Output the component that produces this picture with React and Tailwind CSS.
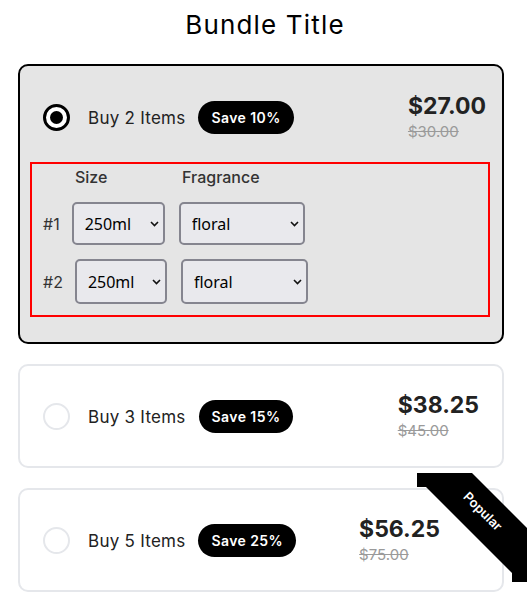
import React from "react";

const bundles = [
  { key: 2, label: "Buy 2 Items", save: "Save 10%", price: "$27.00", was: "$30.00" },
  { key: 3, label: "Buy 3 Items", save: "Save 15%", price: "$38.25", was: "$45.00" },
  { key: 5, label: "Buy 5 Items", save: "Save 25%", price: "$56.25", was: "$75.00" },
];

function Radio({ checked }) {
  if (checked) {
    return (
      <span className="flex h-[27px] w-[27px] shrink-0 items-center justify-center rounded-full border-[3px] border-black bg-white">
        <span className="h-[13px] w-[13px] rounded-full bg-black" />
      </span>
    );
  }
  return <span className="h-[27px] w-[27px] shrink-0 rounded-full border-2 border-[#e5e7eb] bg-white" />;
}

function Chevron() {
  return (
    <svg className="pointer-events-none absolute right-[6px] top-1/2 -mt-[3px]" width="9" height="6" viewBox="0 0 9 6">
      <path d="M1 1l3.5 3.5L8 1" fill="none" stroke="#111" strokeWidth="1.6" />
    </svg>
  );
}

function Picker({ value, options, width, height }) {
  return (
    <div className={`relative ${width}`}>
      <select
        defaultValue={value}
        className={`${height} w-full appearance-none rounded-[5px] border-2 border-[#85858f] bg-[#e9e9ed] pl-[11px] text-[16px] text-black outline-none`}
        style={{ fontFamily: '"Noto Sans", sans-serif' }}
      >
        {options.map((o) => (
          <option key={o}>{o}</option>
        ))}
      </select>
      <Chevron />
    </div>
  );
}

function Header({ bundle, checked }) {
  return (
    <div className="flex items-center">
      <Radio checked={checked} />
      <span className="ml-[18px] pt-[4px] text-[17px] tracking-[0.015em] text-[#222]">{bundle.label}</span>
      <span className="ml-[13px] flex h-[33px] items-center rounded-full bg-black px-[13px] text-[14px] font-semibold tracking-[0.03em] text-white">
        {bundle.save}
      </span>
    </div>
  );
}

function Price({ bundle }) {
  return (
    <div className="flex flex-col">
      <span className="text-[23px] font-bold leading-[30px] text-[#222]">{bundle.price}</span>
      <span className="text-[15px] leading-[22px] text-[#9a9a9a] line-through">{bundle.was}</span>
    </div>
  );
}

export default function App() {
  const [first, second, third] = bundles;

  return (
    <div className="w-[530px] bg-white pb-[17px]" style={{ fontFamily: 'Inter, "Liberation Sans", sans-serif' }}>
      <h1 className="pt-[9px] text-center text-[26px] font-normal leading-8 tracking-[0.045em] text-black">Bundle Title</h1>

      <div className="ml-[18px] mt-[23px] flex w-[486px] flex-col gap-[20px]">
        <div className="rounded-[10px] border-2 border-black bg-[#e5e5e5] pb-[25px] pt-[15px]">
          <div className="flex h-[72px] items-center justify-between pl-[23px] pr-[16px]">
            <Header bundle={first} checked />
            <Price bundle={first} />
          </div>

          <div className="ml-[10px] mt-[9px] w-[460px] border-2 border-[#ff0000] px-[11px] pb-[11px] pt-[1px] text-[#333]">
            <div className="flex h-[24px] items-center pl-[32px] text-[16px] font-medium">
              <span className="w-[107px]">Size</span>
              <span>Fragrance</span>
            </div>
            <div className="mt-[13px] flex items-center">
              <span className="text-[16px]">#1</span>
              <div className="ml-[12px]">
                <Picker value="250ml" options={["250ml", "500ml"]} width="w-[93px]" height="h-[43px]" />
              </div>
              <div className="ml-[14px]">
                <Picker value="floral" options={["floral", "citrus", "woody"]} width="w-[126px]" height="h-[43px]" />
              </div>
            </div>
            <div className="mt-[14px] flex items-center">
              <span className="text-[16px]">#2</span>
              <div className="ml-[12px]">
                <Picker value="250ml" options={["250ml", "500ml"]} width="w-[92px]" height="h-[45px]" />
              </div>
              <div className="ml-[14px]">
                <Picker value="floral" options={["floral", "citrus", "woody"]} width="w-[127px]" height="h-[45px]" />
              </div>
            </div>
          </div>
        </div>

        <div className="flex h-[104px] items-center justify-between rounded-[10px] border-2 border-[#e5e7eb] pl-[23px] pr-[23px]">
          <Header bundle={second} />
          <Price bundle={second} />
        </div>

        <div className="relative flex h-[104px] items-center justify-between rounded-[10px] border-2 border-[#e5e7eb] pl-[23px] pr-[62px]">
          <Header bundle={third} />
          <Price bundle={third} />
          <svg className="absolute left-[397px] top-[-17px]" width="110" height="109" viewBox="0 0 110 109">
            <polygon points="0,0 55,0 110,55 110,109 95,109 95,100 9,14 0,14" fill="#000" />
            <text
              x="65"
              y="39"
              fill="#fff"
              fontSize="13"
              fontWeight="600"
              textAnchor="middle"
              dominantBaseline="middle"
              transform="rotate(45 65 39)"
              style={{ fontFamily: "Inter, sans-serif" }}
            >
              Popular
            </text>
          </svg>
        </div>
      </div>
    </div>
  );
}
